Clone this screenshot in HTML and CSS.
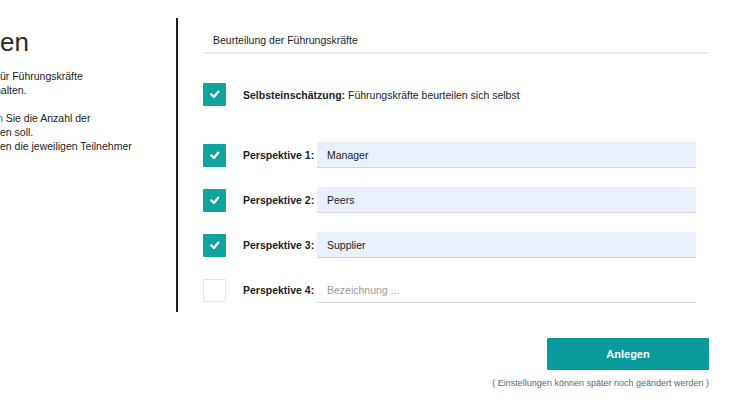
FILE: index.html
```html
<!DOCTYPE html>
<html lang="de">
<head>
<meta charset="utf-8">
<title>Perspektiven anlegen</title>
<link rel="stylesheet" href="styles.css">
</head>
<body>
<div class="page">
  <aside class="left">
    <h1 class="title">en</h1>
    <div class="intro">
      <div class="line l1">für Führungskräfte</div>
      <div class="line l2">halten.</div>
      <div class="line gap l3"><span class="link">n</span> Sie die Anzahl der</div>
      <div class="line">en soll.</div>
      <div class="line">en die jeweiligen Teilnehmer</div>
    </div>
  </aside>
  <div class="divider"></div>
  <main class="main">
    <div class="header">Beurteilung der Führungskräfte</div>

    <div class="self-row">
      <span class="cb checked"><svg viewBox="0 0 23 23" width="23" height="23"><path d="M8.3 11.4 L10.9 13.9 L15.4 8.6" fill="none" stroke="#fff" stroke-width="2.3" stroke-linecap="round" stroke-linejoin="round"/></svg></span>
      <span class="self-text"><b>Selbsteinschätzung:</b> Führungskräfte beurteilen sich selbst</span>
    </div>

    <div class="persp-list">
      <div class="persp-row">
        <span class="cb checked"><svg viewBox="0 0 23 23" width="23" height="23"><path d="M8.3 11.4 L10.9 13.9 L15.4 8.6" fill="none" stroke="#fff" stroke-width="2.3" stroke-linecap="round" stroke-linejoin="round"/></svg></span>
        <span class="persp-label">Perspektive 1:</span>
        <input class="persp-input filled" type="text" value="Manager">
      </div>
      <div class="persp-row">
        <span class="cb checked"><svg viewBox="0 0 23 23" width="23" height="23"><path d="M8.3 11.4 L10.9 13.9 L15.4 8.6" fill="none" stroke="#fff" stroke-width="2.3" stroke-linecap="round" stroke-linejoin="round"/></svg></span>
        <span class="persp-label">Perspektive 2:</span>
        <input class="persp-input filled" type="text" value="Peers">
      </div>
      <div class="persp-row">
        <span class="cb checked"><svg viewBox="0 0 23 23" width="23" height="23"><path d="M8.3 11.4 L10.9 13.9 L15.4 8.6" fill="none" stroke="#fff" stroke-width="2.3" stroke-linecap="round" stroke-linejoin="round"/></svg></span>
        <span class="persp-label">Perspektive 3:</span>
        <input class="persp-input filled" type="text" value="Supplier">
      </div>
      <div class="persp-row">
        <span class="cb"></span>
        <span class="persp-label">Perspektive 4:</span>
        <input class="persp-input" type="text" placeholder="Bezeichnung ...">
      </div>
    </div>

    <div class="actions">
      <button class="btn" type="button">Anlegen</button>
      <div class="hint">( Einstellungen können später noch geändert werden )</div>
    </div>
  </main>
</div>
</body>
</html>
```

FILE: styles.css
```css
* { box-sizing: border-box; }
html, body {
  margin: 0;
  padding: 0;
  background: #fff;
}
body {
  font-family: "Liberation Sans", Arial, Helvetica, sans-serif;
  color: #222;
  font-size: 10.5px;
  width: 750px;
  height: 406px;
  overflow: hidden;
}
.page {
  display: flex;
  height: 406px;
}
.left {
  width: 176px;
  flex: none;
  overflow: hidden;
}
.title {
  margin: 27px 0 0 0;
  font-size: 26px;
  line-height: 30px;
  font-weight: normal;
  color: #2a2a2a;
  white-space: nowrap;
}
.intro {
  margin-top: 12px;
}
.line {
  white-space: nowrap;
  line-height: 14px;
  font-size: 10.5px;
  color: #222;
}
.line.gap { margin-top: 14px; }
.l1 { margin-left: -3px; }
.l2 { margin-left: -5px; }
.l3 { margin-left: -3px; }
.link { color: #2b7bb9; }

.divider {
  width: 2px;
  flex: none;
  background: #1e1e1e;
  margin-top: 18px;
  height: 294px;
}
.main {
  flex: 1;
  padding: 0 41px 0 25px;
}
.header {
  padding: 33px 10px 5px;
  line-height: 14px;
  border-bottom: 2px solid #ebebeb;
  color: #222;
}
.cb {
  width: 23px;
  height: 23px;
  flex: none;
  border-radius: 1px;
  border: 1px solid #e4e4e4;
  background: #fff;
  display: flex;
}
.cb.checked {
  background: #11a49f;
  border: none;
}
.cb svg { display: block; }
.self-row {
  margin-top: 29px;
  display: flex;
  align-items: center;
  gap: 17px;
}
.self-text b { font-weight: bold; }
.persp-list {
  margin-top: 36px;
  display: flex;
  flex-direction: column;
  gap: 19px;
  margin-right: 13px;
}
.persp-row {
  display: flex;
  align-items: center;
  height: 26px;
}
.persp-label {
  margin-left: 17px;
  width: 74px;
  flex: none;
  font-weight: bold;
  white-space: nowrap;
}
.persp-input {
  flex: 1;
  height: 26px;
  border: none;
  border-bottom: 1px solid #d6d6d6;
  background: #fff;
  padding: 0 10px;
  font-family: "Liberation Sans", Arial, Helvetica, sans-serif;
  font-size: 10.5px;
  color: #222;
  outline: none;
  margin: 0;
}
.persp-input.filled {
  background: #e8f0fe;
}
.persp-input::placeholder {
  color: #9a9a9a;
}
.actions {
  margin-top: 35px;
  display: flex;
  flex-direction: column;
  align-items: flex-end;
}
.btn {
  width: 162px;
  height: 32px;
  border: none;
  border-radius: 1px;
  background: #099a9c;
  color: #fff;
  font-family: "Liberation Sans", Arial, Helvetica, sans-serif;
  font-weight: bold;
  font-size: 11px;
  padding: 0;
}
.hint {
  margin-top: 7px;
  font-size: 9px;
  line-height: 12px;
  color: #666;
  white-space: nowrap;
}
```
